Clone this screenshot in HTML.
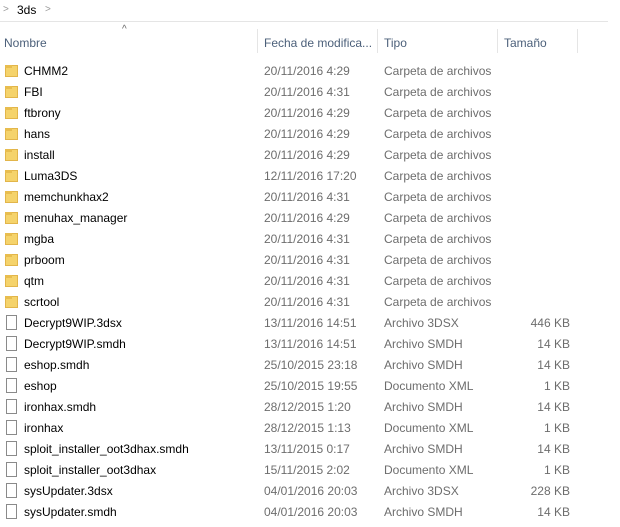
<!DOCTYPE html><html><head><style>
body{margin:0;width:620px;height:527px;background:#fff;font-family:"Liberation Sans",sans-serif;font-size:12px;color:#000;position:relative;overflow:hidden}
.a{position:absolute}
.hl{top:21px;left:0;width:608px;height:1px;background:#e5e5e5}
.sep{top:29px;width:1px;height:24px;background:#e5e5e5}
.h{top:36px;color:#4c607a}
.row{position:absolute;left:0;width:600px;height:21px}
.row span{position:absolute;top:3px;white-space:nowrap}
.n{left:24px}.d{left:264px;color:#6d6d6d}.t{left:384px;color:#6d6d6d}.s{right:30px;color:#6d6d6d}
.fo{position:absolute;left:5px;top:4px;width:13px;height:12px;background:#f5d36b;border:1px solid #e2b54a;box-sizing:border-box}
.fo:before{content:"";position:absolute;left:-1px;top:-1px;width:7px;height:3px;background:#e8bd4f}
.fi{position:absolute;left:6px;top:2px;width:11px;height:15px;border:1px solid #8a8a8a;box-sizing:border-box;background:#fff}
</style></head><body>
<div class="a" style="left:3px;top:4px;color:#999;font-size:10px">&gt;</div>
<div class="a" style="left:17px;top:3px">3ds</div>
<div class="a" style="left:45px;top:4px;color:#999;font-size:10px">&gt;</div>
<div class="a hl"></div>
<div class="a" style="left:122px;top:24px;color:#666;font-size:10px">^</div>
<div class="a h" style="left:4px">Nombre</div>
<div class="a sep" style="left:257px"></div><div class="a h" style="left:264px">Fecha de modifica...</div>
<div class="a sep" style="left:377px"></div><div class="a h" style="left:384px">Tipo</div>
<div class="a sep" style="left:497px"></div><div class="a h" style="left:504px">Tamaño</div>
<div class="a sep" style="left:577px"></div>
<div id="l"></div>
<script>
var F=[["CHMM2","20/11/2016 4:29"],["FBI","20/11/2016 4:31"],["ftbrony","20/11/2016 4:29"],["hans","20/11/2016 4:29"],["install","20/11/2016 4:29"],["Luma3DS","12/11/2016 17:20"],["memchunkhax2","20/11/2016 4:31"],["menuhax_manager","20/11/2016 4:29"],["mgba","20/11/2016 4:31"],["prboom","20/11/2016 4:31"],["qtm","20/11/2016 4:31"],["scrtool","20/11/2016 4:31"]];
var G=[["Decrypt9WIP.3dsx","13/11/2016 14:51","Archivo 3DSX","446 KB"],["Decrypt9WIP.smdh","13/11/2016 14:51","Archivo SMDH","14 KB"],["eshop.smdh","25/10/2015 23:18","Archivo SMDH","14 KB"],["eshop","25/10/2015 19:55","Documento XML","1 KB"],["ironhax.smdh","28/12/2015 1:20","Archivo SMDH","14 KB"],["ironhax","28/12/2015 1:13","Documento XML","1 KB"],["sploit_installer_oot3dhax.smdh","13/11/2015 0:17","Archivo SMDH","14 KB"],["sploit_installer_oot3dhax","15/11/2015 2:02","Documento XML","1 KB"],["sysUpdater.3dsx","04/01/2016 20:03","Archivo 3DSX","228 KB"],["sysUpdater.smdh","04/01/2016 20:03","Archivo SMDH","14 KB"]];
var h="",y=61;
F.forEach(function(r){h+='<div class="row" style="top:'+y+'px"><div class="fo"></div><span class="n">'+r[0]+'</span><span class="d">'+r[1]+'</span><span class="t">Carpeta de archivos</span></div>';y+=21});
G.forEach(function(r){h+='<div class="row" style="top:'+y+'px"><div class="fi"></div><span class="n">'+r[0]+'</span><span class="d">'+r[1]+'</span><span class="t">'+r[2]+'</span><span class="s">'+r[3]+'</span></div>';y+=21});
document.getElementById("l").innerHTML=h;
</script>
</body></html>
